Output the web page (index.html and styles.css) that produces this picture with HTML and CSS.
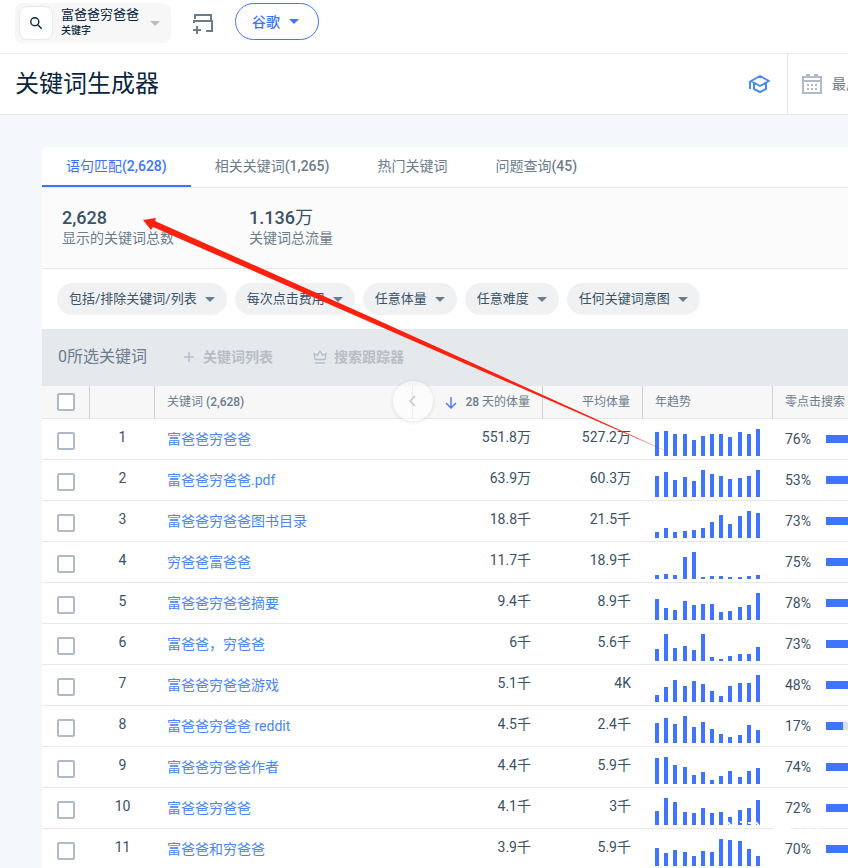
FILE: index.html
```
<!DOCTYPE html>
<html lang="zh-CN">
<head>
    <meta charset="UTF-8">
    <title>关键词生成器</title>
    <link rel="stylesheet" href="styles.css">
</head>
<body>
<div class="page">
    <header class="topbar">
        <button class="search-box" type="button">
            <span class="search-icon">
                <svg width="14" height="14" viewBox="0 0 14 14" fill="none" stroke="#092540" stroke-width="1.4"><circle cx="5.8" cy="5.8" r="4"/><path d="M8.7 8.7l4 4"/></svg>
            </span>
            <span class="search-text">
                <span class="search-word">富爸爸穷爸爸</span>
                <span class="search-type">关键字</span>
            </span>
            <i class="caret gray"></i>
        </button>
        <button class="compare" type="button" aria-label="添加">
            <svg width="20" height="20" viewBox="0 0 20 20" fill="none" stroke="#6b7c8c" stroke-width="2"><path d="M2 5V1h16v5M1 9V7h18v10h-6M0 16h8M4 12v8"/></svg>
        </button>
        <button class="engine" type="button">谷歌<i class="caret blue"></i></button>
    </header>
    <div class="title-bar">
        <h1>关键词生成器</h1>
        <button class="academy" type="button" aria-label="学院">
            <svg width="22" height="20" viewBox="0 0 22 20" fill="none" stroke="#4a8af4" stroke-width="2" stroke-linejoin="round"><path d="M11 2l9 5-9 5-9-5zM5 9v6l6 3 6-3V9M1 15V7"/></svg>
        </button>
        <button class="date" type="button">
            <svg width="20" height="20" viewBox="0 0 20 20" fill="none" stroke="#b0bac8" stroke-width="2"><path d="M1 3h18v16H1zM1 7h18M4 1h4M12 1h4"/><path d="M5 11h10M5 15h10" stroke-dasharray="2 2"/></svg>
            <span>最后28天</span>
        </button>
    </div>

    <main class="card">
        <nav class="tabs">
            <a class="tab select" href="#">语句匹配<b>(2,628)</b></a>
            <a class="tab" href="#">相关关键词<b>(1,265)</b></a>
            <a class="tab" href="#">热门关键词</a>
            <a class="tab" href="#">问题查询<b>(45)</b></a>
        </nav>
        <div class="summary">
            <div class="total"><strong><b>2,628</b></strong><span>显示的关键词总数</span></div>
            <div class="total"><strong><b>1.136</b>万</strong><span>关键词总流量</span></div>
        </div>
        <div class="filters">
            <button type="button">包括/排除关键词/列表<i class="caret"></i></button>
            <button type="button">每次点击费用<i class="caret"></i></button>
            <button type="button">任意体量<i class="caret"></i></button>
            <button type="button">任意难度<i class="caret"></i></button>
            <button type="button">任何关键词意图<i class="caret"></i></button>
        </div>
        <div class="actions">
            <span class="picked">0所选关键词</span>
            <button type="button" disabled>
                <svg width="14" height="14" viewBox="0 0 14 14" fill="none" stroke="#b6bec6" stroke-width="1.5"><path d="M2 7h10M7 2v10"/></svg>关键词列表
            </button>
            <button type="button" disabled>
                <svg width="14" height="14" viewBox="0 0 14 14" fill="none" stroke="#b6bec6" stroke-width="1.4" stroke-linejoin="round"><path d="M2 9.500L1 3.500l3.300 2L7 1l2.700 4.500 3.300-2-1 6zM2 13h10"/></svg>搜索跟踪器
            </button>
        </div>
        <div class="table-box">
            <table>
                <thead>
                <tr>
                    <th class="check"><input type="checkbox" aria-label="全选"></th>
                    <th class="num"></th>
                    <th class="word">关键词 <b>(2,628)</b></th>
                    <th class="volume"><svg width="12" height="14" viewBox="0 0 12 14" fill="none" stroke="#4a7dff" stroke-width="1.5"><path d="M6 1v11M1 7l5 5 5-5"/></svg><b>28</b> 天的体量</th>
                    <th class="average">平均体量</th>
                    <th class="trend">年趋势</th>
                    <th class="zero">零点击搜索</th>
                </tr>
                </thead>
                <tbody id="rows"></tbody>
            </table>
            <button class="collapse" type="button" aria-label="收起">
                <svg width="8" height="12" viewBox="0 0 8 12" fill="none" stroke="#c3c8ce" stroke-width="1.500"><path d="M6 1L1 6l5 5"/></svg>
            </button>
        </div>
    </main>

    <svg class="arrow" width="560" height="250" viewBox="0 0 560 250">
        <defs>
            <linearGradient id="fade" gradientUnits="userSpaceOnUse" x1="0" y1="0" x2="552" y2="246">
                <stop offset="0.85" stop-color="#ff2010"/>
                <stop offset="1" stop-color="#ff2010" stop-opacity="0.1"/>
            </linearGradient>
        </defs>
        <path fill="url(#fade)" d="M0 2l13-2-1 3L230 100l320 145-322-140.500L10 9l-2 3z"/>
    </svg>
    <svg class="watermark" width="110" height="14" viewBox="0 0 110 14" fill="none" stroke="#fff" stroke-width="2">
        <path d="M2 2l3 4 4-3 3 3M14 2h6M17 2v7M22 3h5v5M30 2l4 5M36 3h8M40 1v7M48 8h17M73 8l5-2 4 2 6-2 5 2"/>
    </svg>
</div>
<script>
    //关键词, 28天体量, 平均体量, 零点击, 年趋势
    var list = [
        ["富爸爸穷爸爸", "551.8万", "527.2万", 76, [24,25,22,22,16,20,22,22,19,24,22,27]],
        ["富爸爸穷爸爸.pdf", "63.9万", "60.3万", 53, [21,25,17,20,16,27,23,21,18,19,21,27]],
        ["富爸爸穷爸爸图书目录", "18.8千", "21.5千", 73, [6,10,6,7,8,10,16,23,14,22,27,25]],
        ["穷爸爸富爸爸", "11.7千", "18.9千", 75, [4,5,4,22,27,2,3,3,2,2,3,4]],
        ["富爸爸穷爸爸摘要", "9.4千", "8.9千", 78, [21,12,10,19,15,16,16,8,9,13,15,27]],
        ["富爸爸，穷爸爸", "6千", "5.6千", 73, [12,27,13,15,11,27,4,2,5,7,7,14]],
        ["富爸爸穷爸爸游戏", "5.1千", "4K", 48, [7,15,22,16,21,18,11,6,16,19,19,27]],
        ["富爸爸穷爸爸 reddit", "4.5千", "2.4千", 17, [20,25,19,27,16,21,14,9,6,8,18,13]],
        ["富爸爸穷爸爸作者", "4.4千", "5.9千", 74, [26,27,19,17,9,12,4,8,13,7,13,16]],
        ["富爸爸穷爸爸", "4.1千", "3千", 72, [14,27,23,13,12,17,12,13,8,15,17,25]],
        ["富爸爸和穷爸爸", "3.9千", "5.9千", 70, [18,13,16,14,10,15,14,27,26,25,17,10]]
    ];
    var html = "";
    for(var i = 0; i < list.length; i++){
        var item = list[i];
        var bars = "";
        for(var j = 0; j < item[4].length; j++){
            bars += '<i style="height:' + item[4][j] + 'px"></i>';
        }
        html += '<tr>' +
            '<td class="check"><input type="checkbox" aria-label="' + item[0] + '"></td>' +
            '<td class="num">' + (i + 1) + '</td>' +
            '<td class="word"><a href="#">' + item[0] + '</a></td>' +
            '<td class="volume">' + item[1] + '</td>' +
            '<td class="average">' + item[2] + '</td>' +
            '<td class="trend"><div class="bars">' + bars + '</div></td>' +
            '<td class="zero"><div class="share"><span>' + item[3] + '%</span><div class="track"><i style="width:' + item[3] + '%"></i></div></div></td>' +
            '</tr>';
    }
    document.getElementById("rows").innerHTML = html;
</script>
</body>
</html>
```
FILE: styles.css
```
* { box-sizing: border-box; }
body,h1,table,th,td,button,input { margin:0; padding:0; }
body { background:#f4f8fd; color:#3a5166; font: 14px/20px Roboto, "Noto Sans CJK SC", sans-serif; overflow: hidden; }
h1 { font-weight:normal; }
b { font-weight:500; }
a { color:#4a86f7; text-decoration:none; }
button { font: inherit; color: inherit; border: none; background: none; white-space: nowrap; cursor: pointer; }
i { font-style: normal; }
svg { display: block; flex: none; }

.page{
    position: relative;
    height: 100vh;
    overflow: hidden;
}

.caret{
    flex: none;
    border: 5px solid transparent;
    border-top-color: #6b7c8c;
    border-bottom: none;
}
.caret.gray{
    border-top-color: #b6bec6;
}
.caret.blue{
    border-top-color: #3e74fe;
}

.topbar{
    display: flex;
    align-items: flex-start;
    height: 54px;
    padding: 3px 15px 0;
    background: #fff;
    border-bottom: 1px solid #e6e9ec;
}
.search-box{
    display: flex;
    align-items: center;
    width: 156px;
    height: 40px;
    padding: 0 11px 0 4px;
    background: #f7f7f7;
    border-radius: 8px;
    color: #092540;
    text-align: left;
}
.search-icon{
    display: flex;
    align-items: center;
    justify-content: center;
    width: 34px;
    height: 34px;
    margin-right: 8px;
    background: #fff;
    border: 1px solid #e6e9ec;
    border-radius: 8px;
}
.search-text{
    flex: 1;
}
.search-word,
.search-type{
    display: block;
    font-size: 13px;
    line-height: 16px;
}
.search-type{
    font-size: 10px;
    font-weight: 500;
}
.compare{
    margin: 11px 22px 0;
}
.engine{
    display: flex;
    align-items: center;
    gap: 9px;
    height: 37px;
    padding: 0 19px 0 16px;
    border: 1px solid #3e74fe;
    border-radius: 19px;
    color: #3e74fe;
    font-weight: 500;
}

.title-bar{
    display: flex;
    align-items: center;
    height: 61px;
    padding-left: 15px;
    background: #fff;
    border-bottom: 1px solid #e6e9ec;
}
.title-bar h1{
    flex: 1;
    color: #092540;
    font-size: 24px;
    line-height: 36px;
}
.academy{
    margin-right: 16px;
}
.date{
    display: flex;
    align-items: center;
    gap: 10px;
    width: 61px;
    height: 60px;
    padding-left: 14px;
    border-left: 1px solid #e6e9ec;
    color: #6b7c8c;
}

.card{
    width: 1200px;
    margin: 32px 0 0 42px;
    background: #fff;
    border-radius: 6px 0 0;
}
.tabs{
    display: flex;
    height: 41px;
    border-bottom: 1px solid #e6e9ec;
}
.tab{
    padding: 0 24px;
    color: #6b7c8c;
    line-height: 39px;
}
.tab.select{
    height: 40px;
    color: #3e74fe;
    border-bottom: 2px solid #3e74fe;
}
.summary{
    display: flex;
    height: 81px;
    padding: 20px 20px 0;
    background: #fbfbfb;
    border-bottom: 1px solid #e6e9ec;
}
.total{
    width: 187px;
}
.total strong,
.total span{
    display: block;
}
.total strong{
    font-size: 18px;
    font-weight: normal;
}
.total span{
    color: #6b7c8c;
}
.filters{
    display: flex;
    gap: 8px;
    height: 60px;
    padding: 14px 15px 0;
}
.filters button{
    display: flex;
    align-items: center;
    gap: 8px;
    height: 32px;
    padding: 0 12px;
    background: #eff1f3;
    border-radius: 16px;
    font-size: 13px;
}
.actions{
    display: flex;
    align-items: center;
    gap: 40px;
    height: 57px;
    padding: 0 0 2px 16px;
    background: #e5e9ec;
}
.picked{
    margin-right: -5px;
    color: #6b7c8c;
    font-size: 16px;
}
.actions button{
    display: flex;
    align-items: center;
    gap: 7px;
    color: #b6bec6;
    font-weight: 700;
}

.table-box{
    position: relative;
}
table{
    width: 100%;
    table-layout: fixed;
    border-collapse: separate;
    border-spacing: 0;
}
th{
    height: 33px;
    background: #f7f7f7;
    border-bottom: 1px solid #e6e9ec;
    border-right: 1px solid #ccd2d9;
    color: #6b7c8c;
    font-size: 12px;
    font-weight: normal;
    text-align: left;
}
td{
    height: 41px;
    padding-bottom: 4px;
    border-bottom: 1px solid #e6e9ec;
}
.check{
    width: 48px;
    padding: 0 0 0 15px;
}
.check input{
    appearance: none;
    display: block;
    width: 18px;
    height: 18px;
    background: #fff;
    border: 2px solid #b0bac8;
    border-radius: 2px;
}
td.check{
    padding-top: 3px;
}
.num{
    width: 65px;
    text-align: center;
}
.word{
    width: 258px;
    padding-left: 12px;
}
td.word{
    padding-bottom: 0;
}
.volume{
    width: 130px;
    padding-right: 12px;
    text-align: right;
}
.volume svg{
    display: inline-block;
    margin-right: 8px;
    vertical-align: middle;
}
.average{
    width: 100px;
    padding-right: 12px;
    text-align: right;
}
.trend{
    width: 130px;
    padding-left: 12px;
}
td.trend{
    padding-bottom: 3px;
    vertical-align: bottom;
}
.bars{
    display: flex;
    align-items: flex-end;
    justify-content: space-between;
    width: 105px;
}
.bars i{
    width: 4px;
    background: #3e74fe;
}
.zero{
    padding-left: 12px;
}
td.zero{
    padding-bottom: 0;
}
.share{
    display: flex;
    align-items: center;
}
.share span{
    width: 41px;
}
.track{
    width: 100px;
    height: 8px;
    background: #dbe0e5;
}
.track i{
    display: block;
    height: 8px;
    background: #3e74fe;
}

.collapse{
    position: absolute;
    left: 351px;
    top: -5px;
    display: flex;
    align-items: center;
    justify-content: center;
    width: 40px;
    height: 40px;
    background: rgba(255, 255, 255, .6);
    border-radius: 50%;
    box-shadow: 0 1px 4px rgba(9, 37, 64, .12);
}
.arrow{
    position: absolute;
    left: 143px;
    top: 218px;
    pointer-events: none;
}
.watermark{
    position: absolute;
    left: 726px;
    top: 820px;
    pointer-events: none;
}
```
